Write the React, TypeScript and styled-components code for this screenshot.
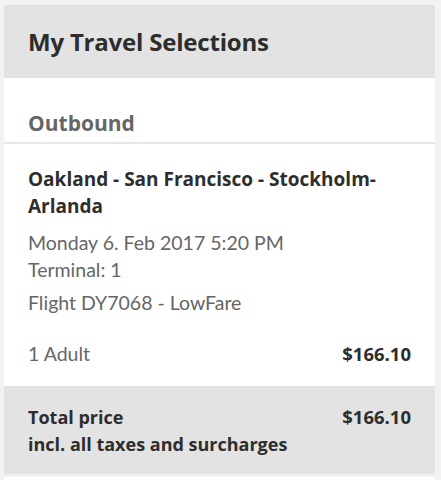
import React from "react";
import styled, { createGlobalStyle } from "styled-components";

const Global = createGlobalStyle`
  html, body { margin: 0; padding: 0; background: #f2f2f2; }
  body { font-family: Lato, "Noto Sans", sans-serif; -webkit-font-smoothing: antialiased; }
`;

const Page = styled.div`
  padding: 5px 6px 0 4px;
  display: flex;
  flex-direction: column;
  gap: 3px;
`;

const Card = styled.div`
  display: flex;
  flex-direction: column;
  background: #fff;
`;

const NextCard = styled.div`
  background: #fff;
  height: 20px;
`;

const Header = styled.div`
  background: #e3e3e3;
  height: 73px;
  box-sizing: border-box;
  padding: 22px 24px 0;
`;

const Title = styled.h1`
  margin: 0;
  font-family: "Open Sans", sans-serif;
  font-size: 24px;
  letter-spacing: -0.2px;
  line-height: 30px;
  font-weight: 700;
  color: #2d2d2d;
`;

const SectionHead = styled.div`
  height: 66px;
  box-sizing: border-box;
  padding: 32px 24px 0;
  border-bottom: 2px solid #e6e6e6;
`;

const SectionTitle = styled.h2`
  margin: 0;
  font-family: "Open Sans", sans-serif;
  font-size: 21px;
  line-height: 26px;
  font-weight: 700;
  color: #666;
`;

const Body = styled.div`
  padding: 22px 24px 0;
  height: 242px;
  box-sizing: border-box;
  display: flex;
  flex-direction: column;
`;

const Route = styled.div`
  font-family: "Open Sans", sans-serif;
  font-size: 19px;
  line-height: 27px;
  font-weight: 700;
  color: #2d2d2d;
`;

const Info = styled.div<{ $gap?: number }>`
  font-size: 19.5px;
  line-height: 27px;
  color: #666;
  margin-top: ${(p) => p.$gap ?? 0}px;
`;

const Row = styled.div<{ $gap?: number }>`
  display: flex;
  justify-content: space-between;
  align-items: baseline;
  margin-top: ${(p) => p.$gap ?? 0}px;
`;

const Label = styled.div`
  font-size: 19.5px;
  line-height: 27px;
  color: #666;
`;

const Price = styled.div`
  font-family: "Open Sans", sans-serif;
  font-size: 18.5px;
  line-height: 27px;
  font-weight: 700;
  color: #2d2d2d;
`;

const Total = styled.div`
  background: #e3e3e3;
  height: 88px;
  box-sizing: border-box;
  padding: 17px 24px 0;
  display: flex;
  justify-content: space-between;
  align-items: baseline;
`;

const TotalText = styled.div`
  font-family: "Open Sans", sans-serif;
  font-size: 18px;
  line-height: 27px;
  font-weight: 700;
  color: #2d2d2d;
`;

export default function App() {
  return (
    <Page>
      <Global />
      <Card>
        <Header>
          <Title>My Travel Selections</Title>
        </Header>
        <SectionHead>
          <SectionTitle>Outbound</SectionTitle>
        </SectionHead>
        <Body>
          <Route>
            Oakland - San Francisco - Stockholm-
            <br />
            Arlanda
          </Route>
          <Info $gap={9}>Monday 6. Feb 2017 5:20 PM</Info>
          <Info>Terminal: 1</Info>
          <Info $gap={6}>Flight DY7068 - LowFare</Info>
          <Row $gap={24}>
            <Label>1 Adult</Label>
            <Price>$166.10</Price>
          </Row>
        </Body>
        <Total>
          <TotalText>
            Total price
            <br />
            incl. all taxes and surcharges
          </TotalText>
          <Price>$166.10</Price>
        </Total>
      </Card>
      <NextCard />
    </Page>
  );
}
